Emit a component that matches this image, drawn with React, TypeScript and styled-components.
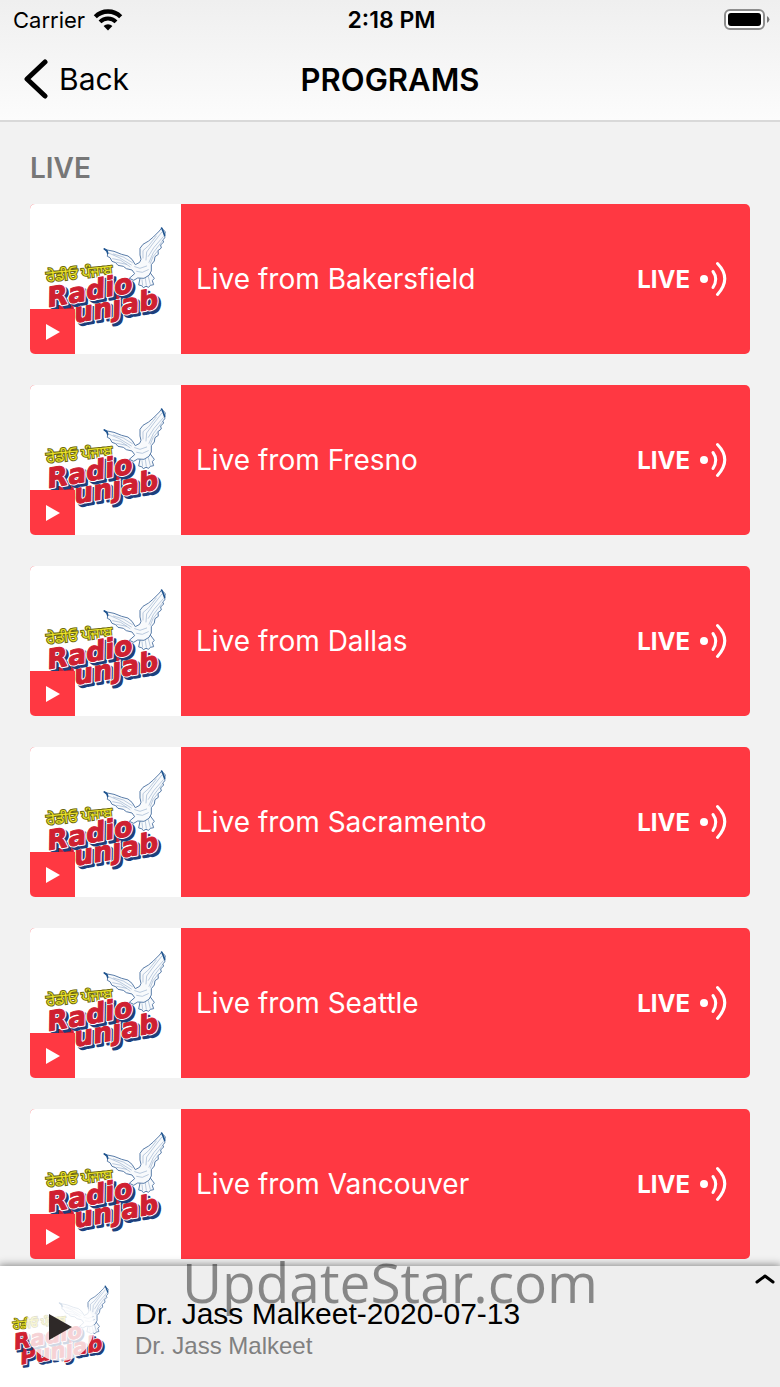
import React from "react";
import styled, { createGlobalStyle } from "styled-components";

const GlobalStyle = createGlobalStyle`
  *, *::before, *::after { box-sizing: border-box; }
  body {
    margin: 0;
    background: #f2f2f2;
    color: #000;
    font-family: Inter, "Liberation Sans", sans-serif;
  }
  button { font: inherit; color: inherit; border: 0; padding: 0; background: none; cursor: pointer; }
`;

const red = "#ff3842";

const Page = styled.div`
  display: flex;
  flex-direction: column;
  min-height: 100vh;
`;

const Header = styled.header`
  background: linear-gradient(#efefef, #fcfcfc);
  border-bottom: 2px solid #d9d9d9;
`;

const ThreeColumns = styled.div`
  display: grid;
  grid-template-columns: 1fr auto 1fr;
  align-items: center;
`;

const StatusBar = styled(ThreeColumns)`
  height: 40px;
  padding: 0 10px 0 13px;
  font-size: 22px;
`;

const NavBar = styled(ThreeColumns)`
  height: 80px;
  padding: 0 24px 2px;
  font-size: 30px;
`;

const Carrier = styled.span`
  display: flex;
  align-items: center;
  gap: 8px;
`;

const Clock = styled.time`
  font-size: 23px;
  font-weight: 600;
`;

const Battery = styled.svg`
  justify-self: end;
`;

const BackButton = styled.button`
  display: flex;
  align-items: center;
  gap: 11px;
  justify-self: start;
`;

const Title = styled.h1`
  margin: 0;
  font-size: 31px;
  font-weight: 600;
`;

const Main = styled.main`
  flex: 1;
  padding: 30px 30px 7px;
`;

const SectionTitle = styled.h2`
  margin: 0 0 20px;
  color: #777;
  font-size: 28px;
  line-height: 32px;
  font-weight: 600;
`;

const ProgramList = styled.ul`
  display: grid;
  gap: 31px;
  margin: 0;
  padding: 0;
  list-style: none;
`;

const ProgramButton = styled.button`
  display: flex;
  width: 100%;
  height: 150px;
  overflow: hidden;
  border-radius: 5px;
  background: ${red};
  color: #fff;
  text-align: left;
`;

const Artwork = styled.span`
  position: relative;
  flex: none;
  width: 151px;
  height: 100%;
  background: #fff;

  > svg { display: block; }
`;

const PlayBadge = styled.span`
  position: absolute;
  left: 0;
  bottom: 0;
  display: grid;
  place-items: center;
  width: 45px;
  height: 45px;
  background: ${red};
`;

const ProgramBody = styled.span`
  display: flex;
  flex: 1;
  align-items: center;
  justify-content: space-between;
  height: 100%;
  padding: 0 23px 0 15px;
  font-size: 28px;
`;

const LiveTag = styled.span`
  display: flex;
  align-items: center;
  gap: 9px;
  font-size: 24px;
  font-weight: 700;
`;

const Player = styled.footer`
  position: sticky;
  bottom: 0;
  display: flex;
  height: 121px;
  background: #eee;
  box-shadow: 0 0 8px 1px rgba(0, 0, 0, 0.45);
  font-family: "Liberation Sans", Arial, sans-serif;
`;

const PlayerArtwork = styled.button`
  position: relative;
  flex: none;
  width: 120px;
  background: #fff;

  > svg { display: block; }
`;

const PlayOverlay = styled.span`
  position: absolute;
  inset: 0;
  display: grid;
  place-items: center;
`;

const TrackInfo = styled.div`
  flex: 1;
  padding: 31px 0 0 15px;
`;

const TrackTitle = styled.p`
  margin: 0;
  font-size: 30px;
  line-height: 34px;
`;

const TrackArtist = styled.p`
  margin: 0;
  color: #808080;
  font-size: 24px;
  line-height: 30px;
`;

const ExpandButton = styled.button`
  align-self: flex-start;
  padding: 7px 5px;

  > svg { display: block; }
`;

const Watermark = styled.span`
  position: absolute;
  top: -21px;
  left: 0;
  right: 0;
  text-align: center;
  color: rgba(0, 0, 0, 0.43);
  font-family: "Open Sans", sans-serif;
  font-size: 55px;
  line-height: 74px;
  pointer-events: none;
`;

function LogoWord({ x, y, children }: { x: number; y: number; children: string }) {
  const font = {
    fontFamily: '"DejaVu Sans", sans-serif',
    fontWeight: 700,
    fontStyle: "italic",
    fontSize: 27,
    strokeLinejoin: "round" as const,
  };
  return (
    <g transform={`translate(${x} ${y}) rotate(-10)`} {...font}>
      <text x="2" y="3" fill="#1d3f7c" stroke="#1d3f7c" strokeWidth="3">{children}</text>
      <text fill="#fff" stroke="#fff" strokeWidth="3">{children}</text>
      <text fill="#cf2031" stroke="#cf2031" strokeWidth="1">{children}</text>
    </g>
  );
}

function RadioLogo({ size }: { size: number }) {
  return (
    <svg width={size} height={size} viewBox="0 0 150 150" role="img" aria-label="Radio Punjab">
      <g transform="rotate(-6 17 78)" fontFamily='"Noto Sans Gurmukhi", "Noto Sans", sans-serif' fontWeight="400" fontSize="15">
        <text x="17" y="78" fill="#ece32a" stroke="#6b6812" strokeWidth="2" paintOrder="stroke">ਰੇਡੀਓ ਪੰਜਾਬ</text>
      </g>
      <LogoWord x={27} y={122}>Punjab</LogoWord>
      <LogoWord x={19} y={103}>Radio</LogoWord>
      <g transform="translate(10 21) scale(0.3333)" fill="#f8fafc" stroke="#587ba8" strokeWidth="3" strokeLinejoin="round" strokeLinecap="round">
        <path d="M300 160 L296 180 L305 182 L310 188 L318 184 L326 187 L331 181 L341 179 L337 167 L343 160 L328 140Z" />
        <path d="M193 72 L202 75 L222 79 L245 88 L264 93 L276 103 L286 119 L299 112 L303 103 L300 90 L300 70 L309 58 L326 48 L340 36 L358 18 L365 9 L369 14 L376 20 L374 31 L375 38 L368 45 L371 51 L362 60 L364 69 L354 77 L355 88 L345 95 L343 108 L334 119 L334 138 L327 151 L312 160 L293 159 L281 166 L268 160 L276 153 L284 146 L276 135 L259 131 L250 124 L234 121 L227 113 L216 109 L210 98 L202 94 L203 85Z" />
        <g fill="none" strokeWidth="2" stroke="#9cb2cf">
          <path d="M206 84 L238 98 L274 120 M218 101 L242 106 L270 125 M230 112 L260 118 M220 87 L250 96 L277 113 M365 22 L340 54 L320 81 L318 105 M370 35 L342 67 L325 94 M366 49 L340 83 L327 112 M355 75 L339 95 L331 115 M349 33 L326 62 L309 77 L309 99 M284 125 L300 130 L320 123 M290 139 L307 142 L325 134 M306 164 L308 181 M316 160 L319 181 M325 155 L331 178" />
        </g>
        <path d="M193 72 L201 77 L203 85 M365 9 L369 18 L374 31" fill="none" stroke="#1f5590" strokeWidth="5" />
      </g>
    </svg>
  );
}

function WifiIcon() {
  return (
    <svg width="30" height="22" viewBox="0 0 30 22" aria-hidden="true">
      <path d="M2.3 7.8A18 18 0 0 1 27.7 7.8" fill="none" stroke="#000" strokeWidth="4.4" />
      <path d="M7 12.8A11.3 11.3 0 0 1 23 12.8" fill="none" stroke="#000" strokeWidth="4" />
      <path d="M10.6 17A6.2 6.2 0 0 1 19.4 17L15 21.4Z" />
    </svg>
  );
}

function BroadcastIcon() {
  return (
    <svg width="28" height="36" viewBox="0 0 28 36" fill="none" stroke="#fff" strokeWidth="3" strokeLinecap="round" aria-hidden="true">
      <circle cx="5" cy="18" r="4" fill="#fff" stroke="none" />
      <path d="M14 10.5Q19.5 18 14 26.5" />
      <path d="M18.5 2.5Q33 17.5 18.5 33.5" />
    </svg>
  );
}

const programs = ["Bakersfield", "Fresno", "Dallas", "Sacramento", "Seattle", "Vancouver"];

export default function App() {
  return (
    <Page>
      <GlobalStyle />
      <Header>
        <StatusBar>
          <Carrier>
            Carrier
            <WifiIcon />
          </Carrier>
          <Clock>2:18 PM</Clock>
          <Battery width="46" height="22" viewBox="0 0 46 22" aria-label="Battery full">
            <rect x="1" y="1" width="39" height="19" rx="5" fill="#fff" stroke="#8d8d8d" strokeWidth="2" />
            <rect x="4" y="4" width="33" height="13" rx="3" />
            <path d="M43 7Q48 10.5 43 14Z" fill="#777" />
          </Battery>
        </StatusBar>
        <NavBar>
          <BackButton>
            <svg width="24" height="40" viewBox="0 0 24 40" fill="none" stroke="#000" strokeWidth="5" strokeLinecap="round" strokeLinejoin="round" aria-hidden="true">
              <path d="M21 3L3 20L21 37" />
            </svg>
            Back
          </BackButton>
          <Title>PROGRAMS</Title>
        </NavBar>
      </Header>

      <Main>
        <SectionTitle>LIVE</SectionTitle>
        <ProgramList>
          {programs.map((city) => (
            <li key={city}>
              <ProgramButton>
                <Artwork>
                  <RadioLogo size={150} />
                  <PlayBadge>
                    <svg width="14" height="16" viewBox="0 0 14 16" fill="#fff" aria-hidden="true">
                      <path d="M0 0L14 8L0 16Z" />
                    </svg>
                  </PlayBadge>
                </Artwork>
                <ProgramBody>
                  Live from {city}
                  <LiveTag>
                    LIVE
                    <BroadcastIcon />
                  </LiveTag>
                </ProgramBody>
              </ProgramButton>
            </li>
          ))}
        </ProgramList>
      </Main>

      <Player>
        <PlayerArtwork aria-label="Play">
          <RadioLogo size={120} />
          <PlayOverlay>
            <svg width="72" height="72" viewBox="0 0 72 72" aria-hidden="true">
              <circle cx="36" cy="36" r="34" fill="#fff" fillOpacity="0.8" />
              <path d="M25 23L48 36L25 49Z" fill="#2e2928" />
            </svg>
          </PlayOverlay>
        </PlayerArtwork>
        <TrackInfo>
          <TrackTitle>Dr. Jass Malkeet-2020-07-13</TrackTitle>
          <TrackArtist>Dr. Jass Malkeet</TrackArtist>
        </TrackInfo>
        <ExpandButton aria-label="Expand player">
          <svg width="20" height="12" viewBox="0 0 20 12" fill="none" stroke="#000" strokeWidth="3" strokeLinecap="round" strokeLinejoin="round">
            <path d="M2 9L10 3L18 9" />
          </svg>
        </ExpandButton>
        <Watermark>UpdateStar.com</Watermark>
      </Player>
    </Page>
  );
}
